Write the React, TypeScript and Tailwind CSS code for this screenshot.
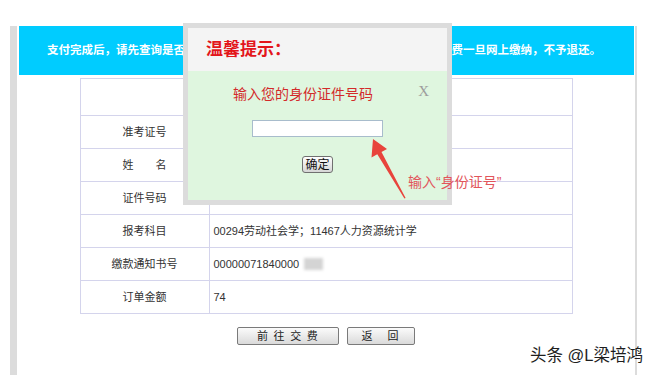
import { JSX } from "react";

type Row = { label: string; value?: JSX.Element | string; first?: boolean };

const rows: Row[] = [
    { label: "", first: true },
    { label: "准考证号" },
    { label: "姓　　名" },
    { label: "证件号码" },
    { label: "报考科目", value: "00294劳动社会学；11467人力资源统计学" },
    {
        label: "缴款通知书号",
        value: (
            <span className="inline-flex items-center">
                00000071840000
                <span className="inline-block ml-[5px] w-[19px] h-[12px] bg-[#d4d4d4] blur-[1.5px]" />
            </span>
        ),
    },
    { label: "订单金额", value: "74" },
];

const Arrow = (): JSX.Element => (
    <svg className="absolute left-[365px] top-[135px]" width="50" height="70" viewBox="365 135 50 70">
        <polygon
            points="373,139 387,149 381.5,152 405.6,198 404.4,198.6 377.3,154.2 371.5,157.5"
            fill="#e8443c"
        />
    </svg>
);

const PromptDialog = (): JSX.Element => {
    return (
        <div className="absolute left-[183px] top-[23px] w-[269px] h-[182px] border-[5px] border-[#dcdcdc] flex flex-col">
            <div className="h-[43px] bg-[#f4f4f4] flex items-center pl-[18px]">
                <span className="text-[17px] font-bold text-[#e3161b] leading-none">温馨提示：</span>
            </div>
            <div className="flex-1 bg-[#dff6df] flex flex-col items-center">
                <div className="w-full flex items-start pt-[13px]">
                    <p className="flex-1 text-center text-[14px] leading-[20px] text-[#d32a2a]">输入您的身份证件号码</p>
                    <span className="mr-[18px] -mt-[3px] font-['Liberation_Serif',serif] text-[15px] leading-[20px] text-[#9d9d9d]">X</span>
                </div>
                <input className="mt-[16px] w-[131px] h-[17px] bg-white border border-[#a8bccc] outline-none" type="text" />
                <button className="mt-[19px] w-[31px] h-[17px] rounded-[3px] border border-[#707070] bg-linear-to-b from-[#ffffff] to-[#d6d6d6] text-[12px] leading-none text-[#111]">
                    确定
                </button>
            </div>
        </div>
    );
};

const App = (): JSX.Element => {
    return (
        <div className="relative w-[658px] h-[375px] overflow-hidden bg-white font-['Liberation_Sans','Noto_Sans_CJK_SC',sans-serif]">
            <div className="ml-[10px] mt-[2px] w-[627px] h-[373px] border-l-[7px] border-r-2 border-b-[13px] border-[#dcdcdc]">
                {/* notice bar, its middle is covered by the dialog */}
                <div className="mt-[26px] ml-[2px] mr-[1px] h-[49px] bg-[#00ccff] flex items-center justify-between pl-[28px] pr-[33px] text-white font-bold text-[11.5px] whitespace-nowrap">
                    <span>支付完成后，请先查询是否</span>
                    <span>费一旦网上缴纳，不予退还。</span>
                </div>
                <table className="mt-[3px] mx-auto w-[493px] border-collapse text-[11px] text-[#333]">
                    <tbody>
                        {rows.map((r, i) => (
                            <tr key={i} className={r.first ? "h-[37px]" : "h-[33px]"}>
                                <td className="w-[129px] border border-[#d4d4ec] text-center">{r.label}</td>
                                <td className="border border-[#d4d4ec] pl-[4px]">{r.value}</td>
                            </tr>
                        ))}
                    </tbody>
                </table>
                <div className="mt-[13px] flex justify-center gap-[8px]">
                    <button className="w-[102px] h-[18px] rounded-[2px] border border-[#7a7a7a] bg-linear-to-b from-[#fbfbfb] to-[#dadada] text-[11px] tracking-[1.25px] leading-none text-[#222]">
                        前 往 交 费
                    </button>
                    <button className="w-[68px] h-[18px] rounded-[2px] border border-[#7a7a7a] bg-linear-to-b from-[#fbfbfb] to-[#dadada] text-[11px] tracking-[2px] leading-none text-[#222]">
                        返　回
                    </button>
                </div>
            </div>

            <PromptDialog />
            <Arrow />
            <p className="absolute left-[408px] top-[172px] text-[14px] leading-[20px] text-[#e2555b] whitespace-nowrap">
                输入“身份证号”
            </p>
            <p className="absolute left-[530px] top-[345px] text-[16.5px] leading-[20px] text-[#1e1e1e] whitespace-nowrap">
                头条 @L梁培鸿
            </p>
        </div>
    );
};

export default App;
